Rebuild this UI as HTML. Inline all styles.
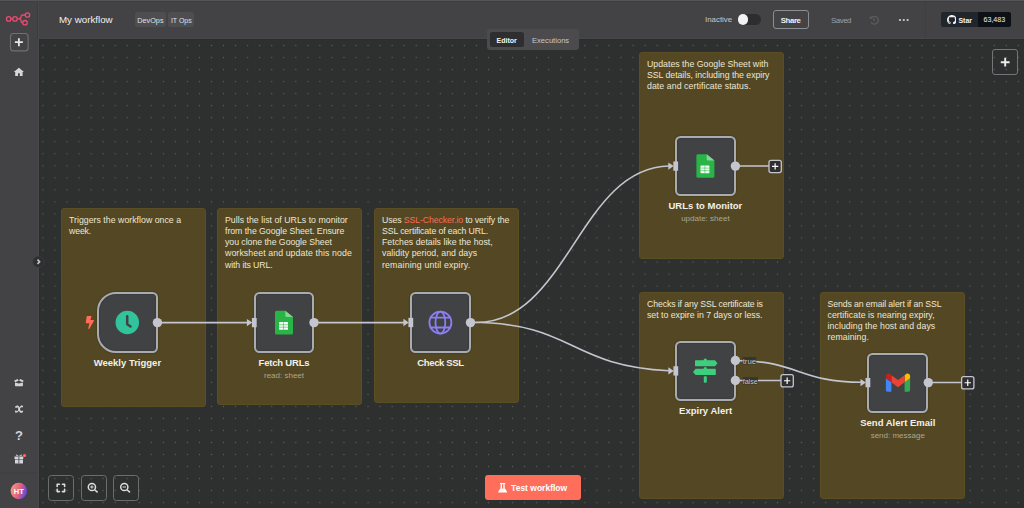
<!DOCTYPE html>
<html><head><meta charset="utf-8">
<style>
*{box-sizing:border-box;margin:0;padding:0}
html,body{width:1024px;height:508px;overflow:hidden}
body{position:relative;background:#2e302f;font-family:"Liberation Sans",sans-serif;color:#fff}
.abs{position:absolute}
.sticky{position:absolute;background:#534823;border:1px solid #5a4e25;border-radius:3px;color:#ebe6d8;font-size:8.75px;line-height:11.2px;padding:5.7px 0 0 7px;white-space:nowrap}
.node{position:absolute;width:60.5px;height:60.6px;background:#414244;border:2px solid #aaabb1;border-radius:5.5px;box-shadow:0 0 2px rgba(0,0,0,0.35), inset 0 0 1px 0.6px #36373a}
.title{position:absolute;font-weight:bold;font-size:9.5px;line-height:10px;white-space:nowrap;color:#f2f0ea;text-align:center;width:120px}
.sub{position:absolute;font-size:8px;line-height:8px;white-space:nowrap;color:#aba793;text-align:center;width:120px}
.hdr{position:absolute;left:0;top:0;width:1024px;height:39px;background:#434345}
.side{position:absolute;left:0;top:0;width:39px;height:508px;background:#434345}
</style></head>
<body>
<!-- canvas dots -->
<svg class="abs" style="left:0;top:0" width="1024" height="508">
<defs><pattern id="dots" patternUnits="userSpaceOnUse" x="36.9" y="39.5" width="12.042" height="12.03"><circle cx="6.02" cy="6.02" r="0.7" fill="#5c5e5d"/></pattern></defs>
<rect x="39" y="39" width="985" height="469" fill="url(#dots)"/>
</svg>

<!-- stickies -->
<div class="sticky" style="left:61px;top:208px;width:145px;height:199px"><div style="letter-spacing:0.019px">Triggers the workflow once a</div><div style="letter-spacing:-0.150px">week.</div></div>
<div class="sticky" style="left:217px;top:208px;width:145px;height:197px"><div style="letter-spacing:0.022px">Pulls the list of URLs to monitor</div><div style="letter-spacing:-0.046px">from the Google Sheet. Ensure</div><div style="letter-spacing:-0.044px">you clone the Google Sheet</div><div style="letter-spacing:0.093px">worksheet and update this node</div><div style="letter-spacing:-0.117px">with its URL.</div></div>
<div class="sticky" style="left:374px;top:208px;width:145px;height:195px"><div style="letter-spacing:-0.109px">Uses <span style="color:#f86c55">SSL-Checker.io</span> to verify the</div><div style="letter-spacing:-0.130px">SSL certificate of each URL.</div><div style="letter-spacing:0.010px">Fetches details like the host,</div><div style="letter-spacing:0.050px">validity period, and days</div><div style="letter-spacing:0.164px">remaining until expiry.</div></div>
<div class="sticky" style="left:639px;top:52px;width:145px;height:207px"><div style="letter-spacing:0.011px">Updates the Google Sheet with</div><div style="letter-spacing:-0.038px">SSL details, including the expiry</div><div style="letter-spacing:0.063px">date and certificate status.</div></div>
<div class="sticky" style="left:639px;top:292px;width:145px;height:207px"><div style="letter-spacing:-0.123px">Checks if any SSL certificate is</div><div style="letter-spacing:-0.010px">set to expire in 7 days or less.</div></div>
<div class="sticky" style="left:819.5px;top:292px;width:145px;height:207px"><div style="letter-spacing:-0.128px">Sends an email alert if an SSL</div><div style="letter-spacing:0.059px">certificate is nearing expiry,</div><div style="letter-spacing:0.065px">including the host and days</div><div style="letter-spacing:0.056px">remaining.</div></div>

<!-- connections -->
<svg class="abs" style="left:0;top:0" width="1024" height="508">
<g fill="none" stroke="#c4c5cf" stroke-width="1.6">
<path d="M157 322.6 L248 322.6"/>
<path d="M314 322.6 L404 322.6"/>
<path d="M470.5 322.3 C567.4 328.8 577.5 167.7 669 166"/>
<path d="M470.5 322.3 C574.8 322.9 566.7 365.4 669 370.8"/>
<path d="M735 360.5 C798.5 360.5 798.5 382.3 862 382.3"/>
<path d="M735 166 L769 166"/>
<path d="M735 380.5 L781 380.5"/>
<path d="M928 382.5 L962 382.5"/>
</g>
</svg>

<!-- nodes -->
<div class="node" style="left:97.1px;top:292.2px;border-radius:19px 5.5px 5.5px 19px"></div>
<div class="node" style="left:253.8px;top:292.4px"></div>
<div class="node" style="left:410.3px;top:292.4px"></div>
<div class="node" style="left:675.2px;top:135.8px"></div>
<div class="node" style="left:675.3px;top:340.9px"></div>
<div class="node" style="left:867.4px;top:352.5px"></div>

<div class="title" style="left:67.4px;top:357.6px">Weekly Trigger</div>
<div class="title" style="left:224px;top:357.6px;letter-spacing:-0.2px">Fetch URLs</div>
<div class="sub" style="left:224px;top:371.6px">read: sheet</div>
<div class="title" style="left:380.5px;top:357.6px;letter-spacing:-0.35px">Check SSL</div>
<div class="title" style="left:645.4px;top:201.1px">URLs to Monitor</div>
<div class="sub" style="left:645.4px;top:214.6px">update: sheet</div>
<div class="title" style="left:645.6px;top:406px">Expiry Alert</div>
<div class="title" style="left:837.8px;top:418.2px">Send Alert Email</div>
<div class="sub" style="left:837.8px;top:432.3px">send: message</div>

<!-- handles & icons -->
<svg class="abs" style="left:0;top:0" width="1024" height="508">
<g fill="#c4c5cf">
<circle cx="157.4" cy="322.6" r="4.7"/>
<circle cx="314" cy="322.6" r="4.7"/>
<circle cx="470.5" cy="322.6" r="4.7"/>
<circle cx="735.4" cy="166.1" r="4.7"/>
<circle cx="735.4" cy="360.5" r="4.7"/>
<circle cx="735.4" cy="380.5" r="4.7"/>
<circle cx="928.3" cy="382.6" r="4.7"/>
<!-- input handles -->
<rect x="251.9" y="317.95" width="4.8" height="9.3"/><path d="M246.9 318.90 L252.3 322.60 L246.9 326.30 Z"/>
<rect x="408.4" y="317.85" width="4.8" height="9.3"/><path d="M403.4 318.80 L408.8 322.50 L403.4 326.20 Z"/>
<rect x="673.3" y="161.45" width="4.8" height="9.3"/><path d="M668.3 162.40 L673.7 166.10 L668.3 169.80 Z"/>
<rect x="673.4" y="366.25" width="4.8" height="9.3"/><path d="M668.4 367.20 L673.8 370.90 L668.4 374.60 Z"/>
<rect x="865.5" y="377.95" width="4.8" height="9.3"/><path d="M860.5 378.90 L865.9 382.60 L860.5 386.30 Z"/>
</g>
<!-- plus boxes -->
<g fill="#2f2f31" stroke="#c4c5cf" stroke-width="1.3">
<rect x="769" y="160.3" width="12.3" height="12.3" rx="2"/>
<rect x="781" y="374.6" width="12.3" height="12.3" rx="2"/>
<rect x="961.6" y="376.6" width="12.3" height="12.3" rx="2"/>
</g>
<g stroke="#ffffff" stroke-width="1.2">
<path d="M772 166.45 H778.3 M775.15 163.3 V169.6"/>
<path d="M784 380.75 H790.3 M787.15 377.6 V383.9"/>
<path d="M964.6 382.75 H970.9 M967.75 379.6 V385.9"/>
</g>
<!-- true/false labels -->
<rect x="742.6" y="357.1" width="13.6" height="7.3" fill="#37352b"/>
<rect x="742.6" y="377.2" width="15.4" height="7.2" fill="#37352b"/>
<text x="742.7" y="363.7" font-size="7.6" fill="#c4c5cf" font-family="Liberation Sans" textLength="13.3" lengthAdjust="spacingAndGlyphs">true</text>
<text x="742.7" y="383.7" font-size="7.6" fill="#c4c5cf" font-family="Liberation Sans" textLength="15" lengthAdjust="spacingAndGlyphs">false</text>

<!-- trigger bolt -->
<path transform="translate(85.8,316) scale(0.0254)" d="M296 160H180.6l42.6-129.8C227.2 15 215.7 0 200 0H56C44 0 33.8 8.9 32.2 20.8l-32 240C-1.7 275.2 9.5 288 24 288h118.7L96.6 482.5c-3.6 15.2 8 29.5 23.3 29.5 8.4 0 16.4-4.4 20.8-12l176-304c9.3-15.9-2.2-36-20.7-36z" fill="#ff6d5a"/>
<!-- clock -->
<circle cx="127.3" cy="322.5" r="11.75" fill="#31c49c"/>
<path d="M127.2 316.2 V324.2 L130.5 326.5" fill="none" stroke="#414244" stroke-width="2.5" stroke-linecap="round" stroke-linejoin="round"/>
<!-- sheets icons -->
<g transform="translate(275,310.8)">
<path d="M0 1.5 Q0 0 1.5 0 H10.3 L18 6.2 V22.1 Q18 23.6 16.5 23.6 H1.5 Q0 23.6 0 22.1 Z" fill="#28b446"/>
<path d="M10.3 0 L18 6.2 H11.8 Q10.3 6.2 10.3 4.7 Z" fill="#86d494"/>
<rect x="4.1" y="11.3" width="8.9" height="7.7" rx="0.6" fill="#f4fbf5"/>
<path d="M4.1 13.9 H13 M4.1 16.4 H13 M8.5 11.3 V19" stroke="#28b446" stroke-width="0.55"/>
</g>
<g transform="translate(696.4,154.2)">
<path d="M0 1.5 Q0 0 1.5 0 H10.3 L18 6.2 V22.1 Q18 23.6 16.5 23.6 H1.5 Q0 23.6 0 22.1 Z" fill="#28b446"/>
<path d="M10.3 0 L18 6.2 H11.8 Q10.3 6.2 10.3 4.7 Z" fill="#86d494"/>
<rect x="4.1" y="11.3" width="8.9" height="7.7" rx="0.6" fill="#f4fbf5"/>
<path d="M4.1 13.9 H13 M4.1 16.4 H13 M8.5 11.3 V19" stroke="#28b446" stroke-width="0.55"/>
</g>
<!-- globe -->
<g fill="none" stroke="#8c7ff0" stroke-width="1.8" transform="translate(440.4,322.6)">
<circle r="11"/>
<ellipse rx="4.9" ry="11"/>
<path d="M-10.6 -4.9 H10.6 M-10.6 4.9 H10.6"/>
</g>
<!-- signpost -->
<g fill="#3ecf7c">
<path d="M695.6 360.2 H715 L717.5 363.2 L715 366.2 H695.6 Q695 366.2 695 365.6 V360.8 Q695 360.2 695.6 360.2 Z"/>
<path d="M715.2 368.8 H695.6 L693 371.9 L695.6 375 H715.2 Q715.8 375 715.8 374.4 V369.4 Q715.8 368.8 715.2 368.8 Z"/>
<circle cx="705.3" cy="360.2" r="1.7"/>
<circle cx="705.3" cy="368.8" r="1.7"/>
<rect x="703.8" y="376.3" width="3" height="6.5" rx="1"/>
</g>
<!-- gmail -->
<g transform="translate(885.9,373.5) scale(0.275) translate(-52,-42)">
<path fill="#4285f4" d="M58 108h14V74L52 59v43c0 3.32 2.690 6 6 6"/>
<path fill="#34a853" d="M120 108h14c3.32 0 6-2.69 6-6V59l-20 15"/>
<path fill="#fbbc04" d="M120 48v26l20-15v-8c0-7.42-8.47-11.65-14.4-7.2"/>
<path fill="#ea4335" d="M72 74V48l24 18 24-18v26L96 92"/>
<path fill="#c5221f" d="M52 51v8l20 15V48l-5.6-4.2c-5.94-4.45-14.4-.22-14.4 7.2"/>
</g>
</svg>

<!-- header -->
<div class="hdr"></div>
<div class="abs" style="left:0;top:0;width:1024px;height:1px;background:#555557"></div>
<div class="abs" style="left:0;top:1px;width:1024px;height:1px;background:#3d3e40"></div>
<div class="abs" style="left:39px;top:38px;width:985px;height:1px;background:#48494b"></div>
<div class="abs" style="left:39px;top:39px;width:985px;height:1px;background:#2a2b2b"></div>
<div class="abs" style="left:925px;top:2px;width:1px;height:36px;background:#3d3e40"></div>
<div class="abs" style="left:59px;top:14.5px;font-size:9.75px;line-height:10px;color:#f0f0f2;white-space:nowrap">My workflow</div>
<div class="abs" style="left:135px;top:12.4px;width:30.5px;height:14.5px;background:#4e4e51;border-radius:2.5px"></div>
<div class="abs" style="left:168.3px;top:12.4px;width:25.6px;height:14.5px;background:#4e4e51;border-radius:2.5px"></div>
<div class="abs" style="left:137.2px;top:16.8px;font-size:7.3px;line-height:7px;color:#dfe0e6;white-space:nowrap">DevOps</div>
<div class="abs" style="left:170.9px;top:16.8px;font-size:7px;line-height:7px;color:#dfe0e6;white-space:nowrap">IT Ops</div>

<div class="abs" style="left:705px;top:16.2px;font-size:7.9px;line-height:8px;color:#c6c7cc;white-space:nowrap">Inactive</div>
<div class="abs" style="left:738.4px;top:14.1px;width:22.3px;height:10.8px;background:#2d2d2f;border-radius:6px"></div>
<div class="abs" style="left:737.7px;top:14.4px;width:10.6px;height:10.6px;background:#f1f1f6;border-radius:50%"></div>
<div class="abs" style="left:773.3px;top:10.3px;width:35.7px;height:18.5px;border:1px solid #8d8d91;border-radius:3px"></div>
<div class="abs" style="left:780.8px;top:16.6px;font-size:7.8px;line-height:7px;font-weight:bold;color:#f2f2f4;white-space:nowrap;letter-spacing:-0.4px">Share</div>
<div class="abs" style="left:831.1px;top:16.6px;font-size:7.8px;line-height:7px;color:#9fa0a5;white-space:nowrap;letter-spacing:-0.45px">Saved</div>
<svg class="abs" style="left:864px;top:10px" width="20" height="20"><g fill="none" stroke="#5b5c60" stroke-width="1.3" stroke-linecap="round"><path d="M7 8.4 A3.9 3.9 0 1 1 7.4 12.6"/><path d="M9.4 8.5 L10.3 10.4"/></g><circle cx="6.5" cy="7.6" r="1.1" fill="#5b5c60"/></svg>
<svg class="abs" style="left:896px;top:17px" width="16" height="6"><g fill="#d2d2d6"><circle cx="4" cy="3" r="1.1"/><circle cx="7.8" cy="3" r="1.1"/><circle cx="11.6" cy="3" r="1.1"/></g></svg>
<div class="abs" style="left:941px;top:12px;width:36.5px;height:15.2px;background:#21262d;border-radius:2px 0 0 2px"></div>
<div class="abs" style="left:977.5px;top:12px;width:33.6px;height:15.2px;background:#0d1117;border-radius:0 2px 2px 0"></div>
<svg class="abs" style="left:946.6px;top:14.6px" width="9.8" height="9.8" viewBox="0 0 16 16"><path fill="#f0f0f0" d="M8 0C3.58 0 0 3.58 0 8c0 3.54 2.29 6.53 5.47 7.59.4.07.55-.17.55-.38 0-.19-.01-.82-.01-1.49-2.01.37-2.53-.49-2.69-.94-.09-.23-.48-.94-.82-1.13-.28-.15-.68-.52-.01-.53.63-.01 1.08.58 1.23.82.72 1.21 1.87.87 2.33.66.07-.52.28-.87.51-1.07-1.78-.2-3.640-.89-3.64-3.95 0-.87.31-1.59.82-2.15-.08-.2-.36-1.02.08-2.12 0 0 .67-.21 2.2.82.64-.18 1.32-.27 2-.27.68 0 1.36.09 2 .27 1.53-1.04 2.2-.82 2.2-.82.44 1.1.16 1.92.08 2.12.51.56.82 1.27.82 2.15 0 3.07-1.87 3.75-3.65 3.95.29.25.54.73.54 1.48 0 1.07-.01 1.93-.01 2.2 0 .21.15.46.55.38A8.013 8.013 0 0016 8c0-4.42-3.58-8-8-8z"/></svg>
<div class="abs" style="left:958.4px;top:17px;font-size:7px;line-height:7px;font-weight:bold;color:#f0f3f6;white-space:nowrap">Star</div>
<div class="abs" style="left:983.5px;top:17px;font-size:7.1px;line-height:7px;color:#f0f3f6;white-space:nowrap">63,483</div>

<!-- tabs -->
<div class="abs" style="left:487px;top:28.8px;width:92px;height:21px;background:#4b4b4e;border-radius:3px"></div>
<div class="abs" style="left:489.8px;top:31.5px;width:34.6px;height:15.4px;background:#2e2e30;border-radius:2.5px"></div>
<div class="abs" style="left:496.6px;top:36.6px;font-size:7px;line-height:7px;font-weight:bold;color:#f5f5f7;white-space:nowrap">Editor</div>
<div class="abs" style="left:532px;top:36.6px;font-size:7.6px;line-height:7px;color:#c5c6cd;white-space:nowrap">Executions</div>

<!-- sidebar -->
<div class="side"></div>
<div class="abs" style="left:37.1px;top:0;width:0.8px;height:39px;background:#3b3c3e"></div>
<div class="abs" style="left:38px;top:0;width:1px;height:508px;background:#48494b"></div>
<div class="abs" style="left:39px;top:40px;width:1px;height:468px;background:#2a2b2b"></div>
<div class="abs" style="left:0;top:0;width:38px;height:1px;background:#555557"></div>
<div class="abs" style="left:0;top:1px;width:38px;height:1px;background:#3d3e40"></div>
<svg class="abs" style="left:0;top:0" width="39" height="508">
<g fill="none" stroke="#ea4b71" stroke-width="1.3">
<circle cx="8.7" cy="18.9" r="2.2"/>
<circle cx="15" cy="18.9" r="2.2"/>
<circle cx="27.5" cy="15" r="2.2"/>
<circle cx="25" cy="22.7" r="2.2"/>
<path d="M10.9 18.9 H12.8 M17.2 18.9 H19.3 M19.3 18.9 Q21 18.9 21 16.8 Q21 15 22.8 15 H25.3 M19.3 18.9 Q21 18.9 21 20.8 Q21 22.7 22.8 22.7"/>
</g>
<rect x="10.5" y="33.5" width="17.6" height="17.4" rx="3" fill="none" stroke="#6f7073" stroke-width="1.1"/>
<path d="M14.9 42.2 H22.9 M18.9 38.2 V46.2" stroke="#e6e6e8" stroke-width="1.8"/>
<!-- home -->
<path d="M18.9 67.8 L13.8 72 H15.2 V76 H18 V73.3 H19.8 V76 H22.6 V72 H24 Z" fill="#d6d6dc"/>
<!-- box icon -->
<path d="M14 380.7 L17.4 379.1 L18.8 380.6 L15.4 382.2 Z M23.8 380.7 L20.4 379.1 L19 380.6 L22.4 382.2 Z M15 382.4 L18.9 383.5 L22.9 382.4 V385.6 Q22.9 386.2 22.3 386.2 H15.6 Q15 386.2 15 385.6 Z" fill="#d2d3da"/>
<!-- x italic -->
<g transform="translate(19,409) scale(0.85,0.95) translate(-19,-409)"><g fill="none" stroke="#d2d3da" stroke-linecap="round"><path d="M15.4 406.9 Q17.3 405.2 18.6 407.6 L19.9 410.6 Q21 412.9 22.9 411.7" stroke-width="1.9"/><path d="M22.6 406.1 Q21.2 405.8 19.6 408.3 L18.1 410.8 Q16.9 412.7 15.2 411.9" stroke-width="1.3"/></g><circle cx="22.6" cy="406.4" r="1.1" fill="#d2d3da"/><circle cx="15.3" cy="411.6" r="1.1" fill="#d2d3da"/></g>
<!-- ? -->
<text x="18.9" y="439.6" text-anchor="middle" font-family="Liberation Sans" font-weight="bold" font-size="13" fill="#d4d4da">?</text>
<!-- gift -->
<path d="M14.5 456.5 H23.3 V459 H14.5 Z M15 459.5 H23 V463.5 H15 Z" fill="#d4d4da"/>
<path d="M18.9 456.3 Q16 453 15.8 455.6 Z M18.9 456.3 Q21.8 453 22 455.6 Z" fill="#d4d4da"/>
<path d="M18.5 456.5 H19.3 V463.5 H18.5 Z" fill="#434345"/>
<circle cx="24.5" cy="455.5" r="1.6" fill="#ff6d5a"/>
<rect x="0" y="472.6" width="38" height="0.8" fill="#3c3d3f"/>
<defs><linearGradient id="av" x1="0" y1="0" x2="1" y2="0.3"><stop offset="0" stop-color="#f5a48a"/><stop offset="0.6" stop-color="#e4617a"/><stop offset="1" stop-color="#6a4cd8"/></linearGradient></defs>
<circle cx="18.8" cy="491" r="8.2" fill="url(#av)"/>
<text x="18.8" y="494.2" text-anchor="middle" font-family="Liberation Sans" font-weight="bold" font-size="7.5" fill="#fff">HT</text>
</svg>
<!-- collapse chevron -->
<svg class="abs" style="left:32px;top:254.5px" width="14" height="14"><circle cx="6.6" cy="6.8" r="5.7" fill="#2e2f30" stroke="#3d3e3f" stroke-width="0.7"/><path d="M5.5 4.6 L7.6 6.8 L5.5 9" fill="none" stroke="#c8c9d0" stroke-width="1.6"/></svg>

<!-- right plus -->
<div class="abs" style="left:992.1px;top:48.5px;width:26px;height:26px;border:1.2px solid #747578;border-radius:3px"></div>
<svg class="abs" style="left:992px;top:48.5px" width="26" height="26"><path d="M8.8 13.2 H17.6 M13.2 8.8 V17.6" stroke="#ececee" stroke-width="1.9"/></svg>

<!-- zoom controls -->
<div class="abs" style="left:48.1px;top:475px;width:26px;height:25.7px;border:1.3px solid #6c6c6e;border-radius:3.5px"></div>
<div class="abs" style="left:80.9px;top:475px;width:26px;height:25.7px;border:1.3px solid #6c6c6e;border-radius:3.5px"></div>
<div class="abs" style="left:113.1px;top:475px;width:26px;height:25.7px;border:1.3px solid #6c6c6e;border-radius:3.5px"></div>
<svg class="abs" style="left:0;top:460px" width="160" height="48">
<g fill="none" stroke="#dcdcde" stroke-width="1.5">
<path d="M57.2 26.4 V24.2 H59.4 M62.4 24.2 H64.6 V26.4 M64.6 29.4 V31.6 H62.4 M59.4 31.6 H57.2 V29.4" stroke-width="1.6" stroke-linecap="round" stroke-linejoin="round"/>
<circle cx="91.9" cy="27" r="3.6"/>
<path d="M94.6 29.7 L97.6 32.4"/>
<path d="M90.2 27 H93.6 M91.9 25.3 V28.7" stroke-width="1"/>
<circle cx="124.3" cy="27" r="3.6"/>
<path d="M127 29.7 L130 32.4"/>
<path d="M122.6 27 H126" stroke-width="1"/>
</g>
</svg>

<!-- test workflow -->
<div class="abs" style="left:485.4px;top:475.4px;width:95.4px;height:24.9px;background:#fe6e5b;border-radius:3px"></div>
<svg class="abs" style="left:496px;top:481px" width="14" height="14"><g fill="#fff"><rect x="4" y="2" width="5.2" height="1.2"/><path d="M4.7 3.1 H6 V7.7 H4.5 Z M7.3 3.1 H8.6 L8.8 7.7 H7.3 Z"/><path d="M4.3 7.4 H9 L11.1 10.8 Q11.4 11.6 10.5 11.6 H2.7 Q1.8 11.6 2.1 10.8 Z"/></g></svg>
<div class="abs" style="left:511.1px;top:483.9px;font-size:8.5px;line-height:8px;font-weight:bold;color:#fff;white-space:nowrap">Test workflow</div>
</body></html>
